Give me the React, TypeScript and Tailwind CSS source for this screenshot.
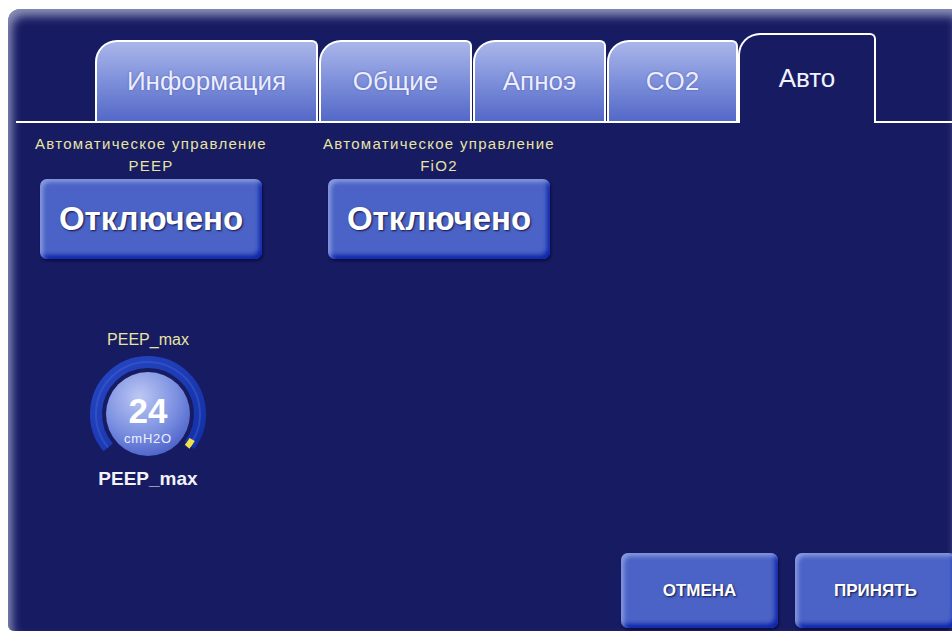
import React from 'react';

const tabs = [
  { label: 'Информация', width: 'w-[223px]' },
  { label: 'Общие', width: 'w-[153px]' },
  { label: 'Апноэ', width: 'w-[133px]' },
  { label: 'CO2', width: 'w-[131px]' },
];

const autoControls = [
  { title: 'Автоматическое управление', param: 'PEEP' },
  { title: 'Автоматическое управление', param: 'FiO2' },
];

const bevelButton =
  'rounded-[7px] bg-[#4b63c6] text-white font-bold shadow-[inset_3px_3px_4px_rgba(190,200,245,0.55),inset_-3px_-4px_4px_rgba(10,35,170,0.95),1px_2px_3px_rgba(0,0,40,0.6)] [text-shadow:1px_1px_2px_rgba(0,0,40,0.8)]';

const Dial = ({ value, unit }: { value: number; unit: string }) => {
  const cx = 62;
  const cy = 62;
  const r = 52;
  const pt = (deg: number, rad: number) => {
    const a = (deg * Math.PI) / 180;
    return `${cx + rad * Math.cos(a)} ${cy + rad * Math.sin(a)}`;
  };
  // arc runs clockwise from lower-left over the top to the lower-right
  const arc = `M ${pt(140, r)} A ${r} ${r} 0 1 1 ${pt(37, r)}`;
  const tick = `M ${pt(30, r - 1)} A ${r - 1} ${r - 1} 0 0 1 ${pt(40, r - 1)}`;
  return (
    <svg width="124" height="124" viewBox="0 0 124 124">
      <defs>
        <radialGradient id="knob" cx="40%" cy="30%" r="75%">
          <stop offset="0%" stopColor="#bcc8f4" />
          <stop offset="60%" stopColor="#7b8fe0" />
          <stop offset="100%" stopColor="#4a60c8" />
        </radialGradient>
        <linearGradient id="ring" x1="0" y1="0" x2="1" y2="1">
          <stop offset="0%" stopColor="#2646c2" />
          <stop offset="100%" stopColor="#1230a6" />
        </linearGradient>
      </defs>
      <path d={arc} fill="none" stroke="url(#ring)" strokeWidth="12" />
      <path d={arc} fill="none" stroke="#4a66d8" strokeOpacity="0.4" strokeWidth="2" />
      <path d={tick} fill="none" stroke="#f2e048" strokeWidth="6" />
      <circle cx={cx} cy={cy} r="42" fill="url(#knob)" />
      <text
        x={cx}
        y="71"
        textAnchor="middle"
        fill="#ffffff"
        fontSize="35"
        fontWeight="700"
        fontFamily="'Liberation Sans', Arial, sans-serif"
      >
        {value}
      </text>
      <text
        x={cx}
        y="91"
        textAnchor="middle"
        fill="#eef0ff"
        fontSize="13"
        letterSpacing="0.8"
        fontFamily="'Liberation Sans', Arial, sans-serif"
      >
        {unit}
      </text>
    </svg>
  );
};

export default function App() {
  return (
    <div className="w-[952px] h-[631px] bg-white pl-[8px] pt-[9px] font-['Liberation_Sans',Arial,sans-serif]">
      <div className="relative h-full overflow-hidden rounded-tl-[12px] rounded-bl-[6px] bg-[#171b62] shadow-[inset_4px_7px_10px_rgba(215,220,240,0.6)] flex flex-col pt-[24px]">
        {/* tab strip */}
        <div className="ml-[8px] flex items-end border-b-2 border-white pl-[79px]">
          {tabs.map((t, i) => (
            <div
              key={t.label}
              className={`${t.width} h-[81px] ${i > 0 ? 'ml-[1px]' : ''} flex items-center justify-center rounded-tl-[22px] rounded-tr-[6px] border-2 border-b-0 border-white bg-gradient-to-b from-[#aab6ea] to-[#5468c8] text-[26px] text-[#eceeff] [text-shadow:0_0_2px_rgba(60,70,160,0.7)]`}
            >
              {t.label}
            </div>
          ))}
          <div className="w-[138px] h-[90px] -mb-[2px] flex items-center justify-center pb-[2px] rounded-tl-[22px] rounded-tr-[6px] border-2 border-b-0 border-white bg-[#171b62] text-[26px] text-[#f0f2ff]">
            Авто
          </div>
        </div>

        {/* auto control toggles */}
        <div className="mt-[9px] ml-[18px] flex gap-[38px]">
          {autoControls.map((c) => (
            <div key={c.param} className="w-[250px] flex flex-col items-center">
              <div className="text-[15px] leading-[23px] tracking-[1.3px] text-[#e8e4a2] text-center whitespace-nowrap">
                <div>{c.title}</div>
                <div className="-mt-[1px]">{c.param}</div>
              </div>
              <button className={`${bevelButton} mt-[2px] w-[222px] h-[80px] text-[33px]`}>
                Отключено
              </button>
            </div>
          ))}
        </div>

        {/* PEEP_max dial */}
        <div className="mt-[72px] ml-[60px] w-[160px] flex flex-col items-center">
          <div className="text-[16px] leading-[18px] text-[#e8e4a2]">PEEP_max</div>
          <div className="mt-[3px]">
            <Dial value={24} unit="cmH2O" />
          </div>
          <div className="-mt-[11px] text-[19px] font-bold text-[#f2f2f8]">PEEP_max</div>
        </div>

        <div className="flex-1" />

        {/* footer actions */}
        <div className="flex justify-end gap-[17px] -mr-[4px] pb-[3px]">
          <button className={`${bevelButton} w-[157px] h-[75px] text-[17px] text-[#ececf4]`}>
            ОТМЕНА
          </button>
          <button className={`${bevelButton} w-[161px] h-[75px] text-[17px] text-[#ececf4]`}>
            ПРИНЯТЬ
          </button>
        </div>
      </div>
    </div>
  );
}
